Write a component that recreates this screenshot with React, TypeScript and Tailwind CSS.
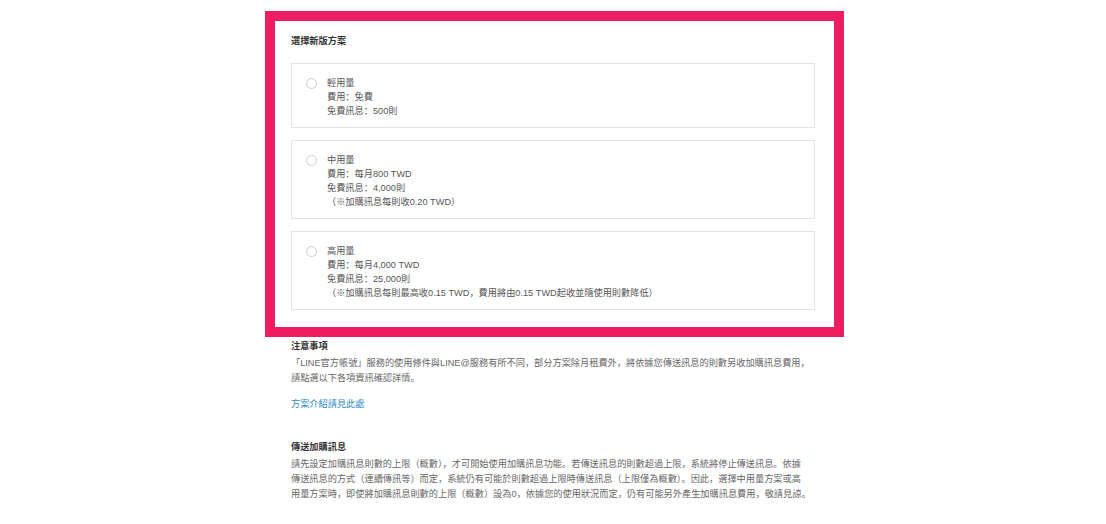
import React from "react";

interface Plan {
  id: string;
  name: string;
  lines: string[];
}

const plans: Plan[] = [
  {
    id: "light",
    name: "輕用量",
    lines: ["費用：免費", "免費訊息：500則"],
  },
  {
    id: "medium",
    name: "中用量",
    lines: ["費用：每月800 TWD", "免費訊息：4,000則", "（※加購訊息每則收0.20 TWD）"],
  },
  {
    id: "heavy",
    name: "高用量",
    lines: [
      "費用：每月4,000 TWD",
      "免費訊息：25,000則",
      "（※加購訊息每則最高收0.15 TWD，費用將由0.15 TWD起收並隨使用則數降低）",
    ],
  },
];

const font = "font-['Liberation_Sans','Noto_Sans_CJK_SC',sans-serif]";

const PlanCard = ({ name, lines }: Plan) => {
  return (
    <label className="flex items-start gap-[10px] border border-[#e4e4e4] bg-white pb-[9px] pl-[14px] pr-4 pt-[12px]">
      <span className="mt-[1.5px] h-[11px] w-[11px] shrink-0 rounded-full border border-[#cdcdcd] bg-white" />
      <div className="text-[9.2px] leading-[14px] text-[#555]">
        <div>{name}</div>
        {lines.map((line) => (
          <div key={line} className="whitespace-nowrap">
            {line}
          </div>
        ))}
      </div>
    </label>
  );
};

export default function App() {
  return (
    <div className={`min-h-[524px] bg-white pt-[11px] ${font}`}>
      <div className="mx-auto w-[524px]">
        {/* highlighted plan selector */}
        <div className="ml-[-26px] mr-[-29px] border-[10px] border-[#ee1d61] pb-[17px] pl-4 pr-[19px] pt-[13px]">
          <h2 className="text-[9.2px] font-bold leading-[14px] text-[#333]">選擇新版方案</h2>
          <div className="mt-[15px] flex flex-col gap-3">
            {plans.map((plan) => (
              <PlanCard key={plan.id} {...plan} />
            ))}
          </div>
        </div>

        <h3 className="mt-[2px] text-[9.2px] font-bold leading-[15px] text-[#333]">注意事項</h3>
        <p className="mt-[2px] text-[9.2px] leading-[15px] text-[#666]">
          <span className="block whitespace-nowrap">
            「LINE官方帳號」服務的使用條件與LINE@服務有所不同，部分方案除月租費外，將依據您傳送訊息的則數另收加購訊息費用，
          </span>
          <span className="block whitespace-nowrap">請點選以下各項資訊確認詳情。</span>
        </p>
        <a href="#" className="mt-[11px] block text-[9.2px] leading-[15px] text-[#2a88c5]">
          方案介紹請見此處
        </a>

        <h3 className="mt-[28px] text-[9.2px] font-bold leading-[15px] text-[#333]">傳送加購訊息</h3>
        <p className="mt-[2px] text-[9.2px] leading-[15px] text-[#666]">
          <span className="block whitespace-nowrap">
            請先設定加購訊息則數的上限（概數），才可開始使用加購訊息功能。若傳送訊息的則數超過上限，系統將停止傳送訊息。依據
          </span>
          <span className="block whitespace-nowrap">
            傳送訊息的方式（連續傳訊等）而定，系統仍有可能於則數超過上限時傳送訊息（上限僅為概數）。因此，選擇中用量方案或高
          </span>
          <span className="block whitespace-nowrap">
            用量方案時，即使將加購訊息則數的上限（概數）設為0，依據您的使用狀況而定，仍有可能另外產生加購訊息費用，敬請見諒。
          </span>
        </p>
      </div>
    </div>
  );
}
